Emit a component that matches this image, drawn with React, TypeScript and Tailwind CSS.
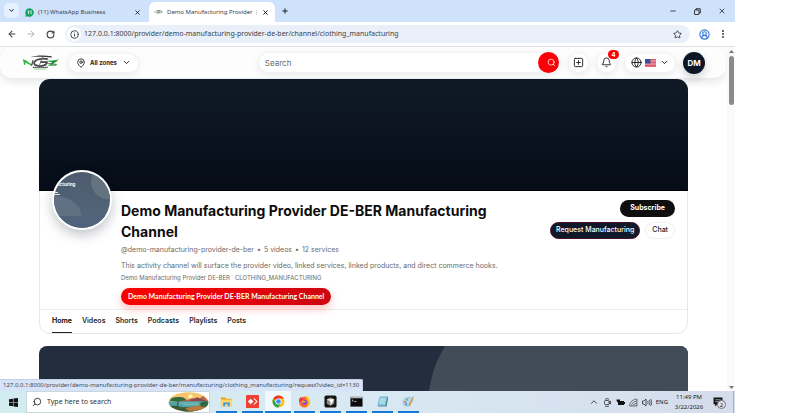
import React, { useState } from "react";
import {
  ArrowLeft,
  ArrowRight,
  RotateCw,
  Info,
  Star,
  CircleUserRound,
  EllipsisVertical,
  ChevronDown,
  ChevronUp,
  MapPin,
  Search,
  SquarePlus,
  Bell,
  Globe,
  X,
  Plus,
  Minus,
} from "lucide-react";

const channelTabs = ["Home", "Videos", "Shorts", "Podcasts", "Playlists", "Posts"];

function WhatsAppIcon() {
  return (
    <svg viewBox="0 0 20 20" className="w-[9px] h-[9px] shrink-0">
      <path d="M10 0.5a9.5 9.5 0 1 1-4.6 17.8L0.6 19.4l1.3-4.6A9.5 9.5 0 0 1 10 0.5z" fill="#12a35a" />
      <path d="M6 8l2-2v8M11.500 8l2-2v8" stroke="#fff" strokeWidth="1.8" fill="none" />
    </svg>
  );
}

function NgzLogo({ className }: { className: string }) {
  return (
    <svg viewBox="0 0 114 46" className={className} role="img" aria-label="NGZ">
      <path d="M24 7c18-7 44-7 66-3v4c-22-3-44-3-66-1z" fill="#3a3a3a" />
      <path d="M1 12l14 9 5 9-4-4-10-5 2 8-3-2z" fill="#1fae3f" />
      <path d="M6 30l3-12 20 14" fill="none" stroke="#35b54a" strokeWidth="4.5" />
      <path d="M28 32l5-16" fill="none" stroke="#4a4a4a" strokeWidth="4" />
      <path d="M78 13c-16-4-38-1-42 10-3 12 24 14 36 6l3-7H54" fill="none" stroke="#4a4a4a" strokeWidth="5.5" />
      <path d="M62 6l-10 26" stroke="#777" strokeWidth="3" />
      <path d="M80 19h22L84 31h20" fill="none" stroke="#35b54a" strokeWidth="4.5" />
      <path d="M86 20l27-7-20 12z" fill="#1d8a35" />
      <path d="M74 25l32 4" stroke="#3a3a3a" strokeWidth="2" />
      <path d="M32 38h46" stroke="#555" strokeWidth="4" strokeDasharray="5 1" />
      <path d="M36 43h38" stroke="#6cc67a" strokeWidth="3" strokeDasharray="5 1" />
    </svg>
  );
}

function UsFlag() {
  return (
    <svg viewBox="0 0 22 16" className="w-[11px] h-[8px] shrink-0">
      <rect width="22" height="16" rx="1" fill="#f2b9c2" />
      <path d="M0 1h22M0 4h22M0 7h22M0 10h22M0 13h22M0 15.500h22" stroke="#d8364b" strokeWidth="1.500" />
      <rect width="11" height="9" fill="#34519c" />
    </svg>
  );
}

function AvatarArt() {
  return (
    <svg viewBox="0 0 56 56" className="w-full h-full" aria-hidden="true">
      <defs>
        <linearGradient id="avatarFill" x1="0" y1="0" x2="0" y2="1">
          <stop offset="0" stopColor="#4d5b6d" />
          <stop offset="1" stopColor="#53677c" />
        </linearGradient>
      </defs>
      <rect width="56" height="56" fill="url(#avatarFill)" />
      <circle cx="54" cy="10" r="17" fill="#65727f" />
      <path d="M0 24c16 0 27 9 27 20H0z" fill="#607184" />
      <rect y="44" width="56" height="12" fill="#4f647b" />
      <path d="M0 20.500h4M0 22.500h6" stroke="#dfe4ea" strokeWidth="1" />
      <text x="3" y="14" fontSize="4.500" fontWeight="700" fontFamily="Inter, sans-serif" fill="#fff">acturing</text>
    </svg>
  );
}

function LandscapeArt() {
  return (
    <svg viewBox="0 0 120 60" className="w-[41px] h-[20px] shrink-0" aria-hidden="true">
      <defs>
        <clipPath id="landClip"><ellipse cx="60" cy="30" rx="60" ry="29" /></clipPath>
      </defs>
      <g clipPath="url(#landClip)">
        <rect width="120" height="60" fill="#f8c56c" />
        <circle cx="66" cy="14" r="7" fill="#fff0ae" />
        <path d="M24 30l20-14 12 8 14-6 18 4 16-10 18 18z" fill="#b5655a" />
        <path d="M60 28l26-12 34 14z" fill="#8c4a4d" />
        <rect y="28" width="120" height="20" fill="#4fa3a5" />
        <path d="M30 33h60M44 38h46" stroke="#8fd0c8" strokeWidth="2" />
        <path d="M0 44c20-8 30 2 54 2s44-8 66-4v18H0z" fill="#3e5a34" />
        <path d="M50 50c20-8 50-12 70-8v14H60z" fill="#b97a3c" />
        <path d="M26 48l4-24" stroke="#5a3a28" strokeWidth="3" />
        <path d="M4 26c4-9 14-12 26-11 14 0 20 5 22 10-16 4-32 4-48 1z" fill="#2f6b3f" />
        <path d="M94 36c4-8 18-10 26-6v14H98z" fill="#2f6b3f" />
      </g>
    </svg>
  );
}

function ExplorerIcon() {
  return (
    <svg viewBox="0 0 28 28" className="w-[13px] h-[13px]">
      <path d="M2 5h9l3 3h11v16H2z" fill="#e9a820" />
      <path d="M2 10h24v14H2z" fill="#ffd766" />
      <path d="M7 24v-8h14v8h-4v-4h-6v4z" fill="#3d9be0" />
    </svg>
  );
}

function AnyDeskIcon() {
  return (
    <svg viewBox="0 0 28 28" className="w-[13px] h-[13px]">
      <rect width="28" height="28" rx="1" fill="#ee4136" />
      <path d="M10 8l6 6-6 6-6-6z" fill="#fff" />
      <path d="M16 8l2-1 7 7-7 7-2-1 6-6z" fill="#fff" />
    </svg>
  );
}

function ChromeIcon() {
  return (
    <svg viewBox="0 0 28 28" className="w-[13px] h-[13px]">
      <circle cx="14" cy="14" r="13" fill="#fbc116" />
      <path d="M14 14L2.700 7.500A13 13 0 0 1 25.300 7.500H14z" fill="#e33b2e" />
      <path d="M2.700 7.500A13 13 0 0 0 13.500 27l6-10L14 14 8 16z" fill="#2da94f" />
      <circle cx="14" cy="14" r="6.500" fill="#fff" />
      <circle cx="14" cy="14" r="5" fill="#4285f4" />
    </svg>
  );
}

function FirefoxIcon() {
  return (
    <svg viewBox="0 0 28 28" className="w-[13px] h-[13px]">
      <circle cx="14" cy="15" r="12" fill="#ff6b2b" />
      <path d="M17 1c5 3 10 8 9.500 15A12 12 0 0 1 14 27c6-2 9-7 8-12-1-4-5-7-5-14z" fill="#ffc42e" />
      <path d="M2 14C2 9 4 6 6 4c0 3 2 4 6 4l-4 6z" fill="#f0344e" />
      <circle cx="14" cy="15.500" r="5.500" fill="#7a4bd8" />
      <path d="M8 12c4-2 6 2 10 1-1 3-5 3-6 5-3-1-4-3-4-6z" fill="#ff9a2e" />
    </svg>
  );
}

function CubeIcon() {
  return (
    <svg viewBox="0 0 28 28" className="w-[13px] h-[13px]">
      <rect x="1" y="1" width="26" height="26" rx="4" fill="#15140f" />
      <path d="M6 9l8-4 8 4v10l-8 4-8-4z" fill="#8b8a86" />
      <path d="M6 9h16l-8 14v-9z" fill="#fff" />
    </svg>
  );
}

function TerminalIcon() {
  return (
    <svg viewBox="0 0 28 28" className="w-[13px] h-[13px]">
      <rect x="1" y="4" width="26" height="21" fill="#0b0b0b" />
      <rect x="1" y="4" width="26" height="3" fill="#b9bdc2" />
      <path d="M4 10l3 2-3 2M9 14h5" stroke="#e8e8e8" strokeWidth="1.500" fill="none" />
    </svg>
  );
}

function NotepadIcon() {
  return (
    <svg viewBox="0 0 28 28" className="w-[13px] h-[13px]">
      <path d="M8 3h16l-4 20H3z" fill="#6fb7cf" />
      <path d="M9 6h13l-3 14H6z" fill="#a7dbe8" />
      <path d="M20 23l4-20 2 3-3 19H6l-3-2z" fill="#4d7f96" />
    </svg>
  );
}

function PaintIcon() {
  return (
    <svg viewBox="0 0 28 28" className="w-[13px] h-[13px]">
      <path d="M2 16C2 8 9 5 16 5s9 6 6 9-5 1-5 5-3 6-8 5-7-4-7-8z" fill="#b7d7ea" stroke="#7fa3bb" />
      <circle cx="7" cy="15" r="2" fill="#e4574c" />
      <circle cx="11" cy="10" r="2" fill="#4fae5b" />
      <circle cx="9" cy="20" r="2" fill="#3c7fd0" />
      <path d="M14 22L24 3l2 1-9 20z" fill="#d7933c" />
    </svg>
  );
}

const taskbarApps = [
  { name: "File Explorer", icon: <ExplorerIcon />, active: false },
  { name: "AnyDesk", icon: <AnyDeskIcon />, active: false },
  { name: "Chrome", icon: <ChromeIcon />, active: true },
  { name: "Firefox", icon: <FirefoxIcon />, active: false },
  { name: "Cursor", icon: <CubeIcon />, active: false },
  { name: "Command Prompt", icon: <TerminalIcon />, active: false },
  { name: "Notepad", icon: <NotepadIcon />, active: false },
  { name: "Paint", icon: <PaintIcon />, active: false },
];

function BrowserBar() {
  return (
    <div className="shrink-0 font-['Noto_Sans',sans-serif] text-[#3c4048]">
      {/* Tab strip */}
      <div className="flex h-[22px] items-end bg-[#cfe2fc]">
        <button aria-label="Search tabs" className="mb-1 ml-[4px] flex h-[15px] w-[15px] items-center justify-center rounded-[5px] bg-[#e6f0fe]">
          <ChevronDown className="h-[7px] w-[7px] text-black" strokeWidth={3} />
        </button>
        <div className="ml-[6px] flex h-[20px] w-[120px] items-center">
          <WhatsAppIcon />
          <span className="ml-[4px] flex-1 truncate text-[6px]">(11) WhatsApp Business</span>
          <button aria-label="Close tab" className="mr-[4px]"><X className="h-[7px] w-[7px] text-black" strokeWidth={2.5} /></button>
        </div>
        <div className="ml-[4px] flex h-[20px] w-[126px] items-center rounded-t-[6px] bg-white pl-[5px]">
          <NgzLogo className="h-[6px] w-[9px] shrink-0" />
          <span className="ml-[4px] whitespace-nowrap text-[6px]">Demo Manufacturing Provider</span>
          <span className="ml-[3px] h-[5px] w-px bg-[#dcdcdc]" />
          <button aria-label="Close tab" className="ml-auto mr-[6px]"><X className="h-[7px] w-[7px] text-black" strokeWidth={3} /></button>
        </div>
        <button aria-label="New tab" className="mb-[7px] ml-[6px]"><Plus className="h-[8px] w-[8px] text-black" strokeWidth={2.5} /></button>
        <div className="mb-[7px] ml-auto mr-[9px] flex items-center gap-[17px] text-black">
          <button aria-label="Minimize"><Minus className="h-[8px] w-[8px]" /></button>
          <button aria-label="Restore">
            <svg viewBox="0 0 14 14" className="h-[7px] w-[7px]" fill="none" stroke="currentColor" strokeWidth="1.500">
              <rect x="1" y="4" width="9" height="9" rx="1" />
              <path d="M4 4V1.500h8.500V10H10" />
            </svg>
          </button>
          <button aria-label="Close window"><X className="h-[8px] w-[8px]" /></button>
        </div>
      </div>

      {/* Address bar */}
      <div className="flex h-[25px] items-center border-b border-[#dfe1e5] bg-white pl-[7px] pr-[7px]">
        <button aria-label="Back"><ArrowLeft className="h-[10px] w-[10px]" strokeWidth={2.5} /></button>
        <button aria-label="Forward" className="ml-[9px]"><ArrowRight className="h-[10px] w-[10px] text-[#a2a5aa]" /></button>
        <button aria-label="Reload" className="ml-[10px]"><RotateCw className="h-[9px] w-[9px]" strokeWidth={3} /></button>
        <div className="ml-[10px] flex h-[18px] flex-1 items-center rounded-full bg-[#e9f0f9] px-[2px]">
          <span className="flex h-[14px] w-[14px] items-center justify-center rounded-full bg-white">
            <Info className="h-[9px] w-[9px]" strokeWidth={2.5} />
          </span>
          <input
            aria-label="Address"
            defaultValue="127.0.0.1:8000/provider/demo-manufacturing-provider-de-ber/channel/clothing_manufacturing"
            className="ml-[3px] min-w-0 flex-1 bg-transparent text-[7px] leading-[12px] outline-none"
          />
          <button aria-label="Bookmark" className="mr-[6px]"><Star className="h-[9px] w-[9px]" strokeWidth={2.5} /></button>
        </div>
        <button aria-label="Profile" className="ml-[9px]"><CircleUserRound className="h-[11px] w-[11px] text-[#3b76d4]" strokeWidth={2.5} /></button>
        <button aria-label="Menu" className="ml-[8px]"><EllipsisVertical className="h-[10px] w-[10px]" strokeWidth={3} /></button>
      </div>
    </div>
  );
}

function SiteHeader() {
  const pill = "flex items-center rounded-full border border-[#f3f3f4] bg-white shadow-[0_2px_6px_rgba(15,23,42,0.08)]";
  return (
    <header className="mr-[1px] flex h-[31px] items-center rounded-xl bg-[#fdfdfd] pl-[22px] pr-[21px] shadow-[0_3px_10px_rgba(15,23,42,0.12)]">
      <a href="#home"><NgzLogo className="h-[15px] w-[38px]" /></a>
      <button className={`${pill} ml-[8px] h-[20px] px-[7px] text-[6px] font-bold leading-[8px] text-[#1c1c1c]`}>
        <MapPin className="h-[10px] w-[10px]" />
        <span className="ml-[4px] mr-[5px]">All zones</span>
        <ChevronDown className="h-[9px] w-[9px]" strokeWidth={2.5} />
      </button>
      <form className={`${pill} ml-[119px] h-[21px] flex-1 pl-[6px]`} onSubmit={(e) => e.preventDefault()}>
        <input aria-label="Search" placeholder="Search" className="min-w-0 flex-1 bg-transparent text-[8px] outline-none placeholder:text-[#6b6b6b]" />
        <button aria-label="Submit search" className="flex h-[21px] w-[21px] shrink-0 items-center justify-center rounded-full bg-[#fb0007] text-white">
          <Search className="ml-[5px] h-[9px] w-[9px]" />
        </button>
      </form>
      <div className="ml-[8px] flex items-center gap-[7px] text-[#1c1c1c]">
        <button aria-label="Create" className={`${pill} h-[21px] w-[21px] justify-center`}><SquarePlus className="h-[11px] w-[11px]" strokeWidth={2} /></button>
        <button aria-label="Notifications" className={`${pill} relative h-[21px] w-[21px] justify-center`}>
          <Bell className="h-[11px] w-[11px]" />
          <span className="absolute -top-[3px] left-[11px] flex h-[9px] w-[11px] items-center justify-center rounded-full bg-[#fb0007] text-[6px] font-bold text-white">4</span>
        </button>
        <button aria-label="Language" className={`${pill} h-[20px] gap-[3px] px-[6px]`}>
          <Globe className="h-[11px] w-[11px]" strokeWidth={2} />
          <UsFlag />
          <ChevronDown className="ml-px h-[9px] w-[9px]" strokeWidth={2.5} />
        </button>
        <button className="flex h-[22px] w-[22px] items-center justify-center rounded-full bg-[#0b1626] text-[8px] font-bold text-white shadow-[0_4px_8px_rgba(15,23,42,0.2)]">DM</button>
      </div>
    </header>
  );
}

function ChannelCard() {
  const [activeTab, setActiveTab] = useState("Home");

  return (
    <section className="rounded-[11px] border border-[#e7e7e8] bg-white">
      <div className="-mx-px -mt-px h-[112px] rounded-t-[11px] border-b border-black bg-linear-to-b from-[#101a27] to-[#060c18]" />

      <div className="flex items-start px-[12px] pb-[4px]">
        <div className="-mt-[21px] h-[60px] w-[60px] shrink-0 overflow-hidden rounded-full border-2 border-white bg-white shadow-[0_5px_12px_rgba(15,23,42,0.25)]">
          <AvatarArt />
        </div>

        <div className="ml-[9px] min-w-0 flex-1 pt-[9px] text-[#6a6a6a]">
          <h1 className="text-[14px] font-bold leading-[21px] text-[#0d0d0d]">Demo Manufacturing Provider DE-BER Manufacturing Channel</h1>
          <p className="mt-[2px] flex gap-[3px] text-[7px] leading-[12px]">
            <span>@demo-manufacturing-provider-de-ber</span>
            <span>•</span>
            <span>5 videos</span>
            <span>•</span>
            <span>12 services</span>
          </p>
          <p className="mt-[4px] text-[7px] leading-[12px]">
            This activity channel will surface the provider video, linked services, linked products, and direct commerce hooks.
          </p>
          <p className="flex gap-[5px] text-[6px] leading-[12px]">
            <span>Demo Manufacturing Provider DE-BER</span>
            <span>CLOTHING_MANUFACTURING</span>
          </p>
          <button className="mt-[4px] block h-[17px] rounded-full bg-linear-to-r from-[#ff0000] to-[#cc0610] px-[7px] font-[Lato,sans-serif] text-[7px] font-bold text-white shadow-[0_4px_9px_rgba(255,0,0,0.25)]">
            Demo Manufacturing Provider DE-BER Manufacturing Channel
          </button>
        </div>

        <div className="ml-[32px] flex flex-col items-end gap-[5px] pt-[9px] text-[7px]">
          <button className="h-[17px] rounded-full bg-[#0f0f0f] px-[10px] font-bold text-white">Subscribe</button>
          <div className="flex gap-[5px]">
            <button className="h-[17px] rounded-full border border-[#4a1027] bg-[#0f1929] px-[5px] font-medium text-white">Request Manufacturing</button>
            <button className="h-[17px] rounded-full border border-[#f0f0f0] px-[6px] font-medium text-[#222]">Chat</button>
          </div>
        </div>
      </div>

      <nav className="flex h-[24px] gap-[10px] border-t border-[#ececec] px-[12px] text-[7px] font-semibold text-[#2a2a2a]">
        {channelTabs.map((tab) => (
          <a
            key={tab}
            href={`#${tab.toLowerCase()}`}
            onClick={() => setActiveTab(tab)}
            className={`flex items-center border-b ${activeTab === tab ? "border-[#222] text-black" : "border-transparent"}`}
          >
            {tab}
          </a>
        ))}
      </nav>
    </section>
  );
}

function Taskbar() {
  return (
    <footer className="flex h-[22px] shrink-0 items-stretch bg-linear-to-r from-[#d2ecf0] via-[#d8e9f3] to-[#d5dcec] font-['Noto_Sans',sans-serif] text-[#222]">
      <button aria-label="Start" className="flex w-[26px] items-center justify-center">
        <svg viewBox="0 0 18 18" className="h-[9px] w-[9px]" fill="#111">
          <path d="M0 2.500l8-1.200V8.500H0zM9 1.200L18 0v8.500H9zM0 9.500h8v7.200L0 15.500zM9 9.500h9V18l-9-1.200z" />
        </svg>
      </button>
      <label className="flex w-[184px] items-center border border-[#c9d6dc] bg-white pl-[5px]">
        <Search className="h-[10px] w-[10px] -scale-x-100" />
        <input aria-label="Type here to search" placeholder="Type here to search" className="ml-[5px] min-w-0 flex-1 bg-transparent text-[7px] outline-none placeholder:text-[#333]" />
        <LandscapeArt />
      </label>
      <div className="ml-[3px] flex">
        {taskbarApps.map((app) => (
          <button
            key={app.name}
            aria-label={app.name}
            className={`flex w-[26px] flex-col items-center justify-between pt-[4px] ${app.active ? "bg-[#f1f8fb]" : ""}`}
          >
            {app.icon}
            <span className={`h-[2px] bg-[#1478d4] ${app.active ? "w-full" : "w-[21px]"}`} />
          </button>
        ))}
      </div>
      <div className="ml-auto flex items-center gap-[4px] pr-[8px]">
        <ChevronUp className="h-[10px] w-[10px]" />
        <svg viewBox="0 0 18 18" className="h-[9px] w-[9px]" fill="none" stroke="currentColor" strokeWidth="1.500">
          <rect x="3" y="5" width="9" height="8" rx="2" />
          <path d="M12 8l3-2v6l-3-2M4 2.500c3-1.500 5-1.500 8 0M4 16c3 1.200 5 1.200 8 0" />
        </svg>
        <svg viewBox="0 0 18 18" className="h-[9px] w-[9px]">
          <rect x="4" y="6" width="12" height="8" fill="#111" />
          <path d="M16 8h2v4h-2zM1 3h7v4c-3 3-7 2-7-4z" fill="#111" />
        </svg>
        <svg viewBox="0 0 18 18" className="h-[9px] w-[9px]" fill="none" stroke="#555" strokeWidth="1.500">
          <path d="M1 16A15 15 0 0 1 16 2M5 16A11 11 0 0 1 16 6M9 16a7 7 0 0 1 7-6M13 16a3 3 0 0 1 3-2M1 16h15V2" />
        </svg>
        <svg viewBox="0 0 20 18" className="h-[9px] w-[10px]" fill="none" stroke="currentColor" strokeWidth="1.500">
          <path d="M1 6h3l4-4v14l-4-4H1zM11 6c1.500 2 1.500 4 0 6M14 4c2.500 3 2.500 7 0 10M17 2c3 4 3 10 0 14" />
        </svg>
        <span className="text-[6px]">ENG</span>
        <div className="ml-[2px] w-[30px] text-center text-[6px] leading-[10px]">
          <div>11:49 PM</div>
          <div>3/22/2026</div>
        </div>
        <button aria-label="Notifications" className="relative ml-[5px] mr-[2px]">
          <svg viewBox="0 0 18 18" className="h-[10px] w-[10px]">
            <path d="M1 1h16v12H8l-4 4v-4H1z" fill="#111" />
            <path d="M4 5h10M4 8.500h10" stroke="#d5dcec" strokeWidth="1.200" />
          </svg>
          <span className="absolute left-[4px] top-[3px] flex h-[9px] w-[9px] items-center justify-center rounded-full border border-[#777] bg-[#e1e5ee] text-[6px] leading-none">2</span>
        </button>
      </div>
      <div className="w-[2px] border-l border-[#a9b1c0]" />
    </footer>
  );
}

export default function App() {
  return (
    <div className="h-screen overflow-hidden bg-white pr-[71px]">
      <div className="flex h-full flex-col">
        <BrowserBar />

        <div className="relative flex min-h-0 flex-1 font-[Inter,sans-serif]">
          <div className="min-w-0 flex-1 overflow-hidden">
            <SiteHeader />
            <main className="mt-px pl-[39px] pr-[39px]">
              <ChannelCard />
              <div className="mt-[12px] h-[110px] overflow-hidden rounded-t-[8px] bg-[#222d3d]">
                <svg viewBox="0 0 649 110" preserveAspectRatio="xMaxYMin slice" className="h-full w-full">
                  <circle cx="503" cy="60" r="114" fill="#414c58" />
                  <rect x="503" width="146" height="110" fill="#414c58" />
                </svg>
              </div>
            </main>
          </div>

          {/* Scrollbar */}
          <div className="flex w-[8px] flex-col items-center bg-[#fafafa] pb-[2px] pt-[3px]">
            <svg viewBox="0 0 10 6" className="h-[3px] w-[5px]"><path d="M0 6l5-6 5 6z" fill="#777" /></svg>
            <div className="mt-[3px] h-[49px] w-[5px] rounded-full bg-[#8b8b8b]" />
            <svg viewBox="0 0 10 6" className="mt-auto h-[3px] w-[5px]"><path d="M0 0l5 6 5-6z" fill="#777" /></svg>
          </div>

          {/* Link preview */}
          <div className="absolute bottom-0 left-0 rounded-tr-[2px] border-r border-t border-[#c3cfe2] bg-[#d7e3f8] px-[3px] font-['Noto_Sans',sans-serif] text-[6px] leading-[11px] text-[#444b57]">
            127.0.0.1:8000/provider/demo-manufacturing-provider-de-ber/manufacturing/clothing_manufacturing/request?video_id=1130
          </div>
        </div>

        <Taskbar />
      </div>
    </div>
  );
}
